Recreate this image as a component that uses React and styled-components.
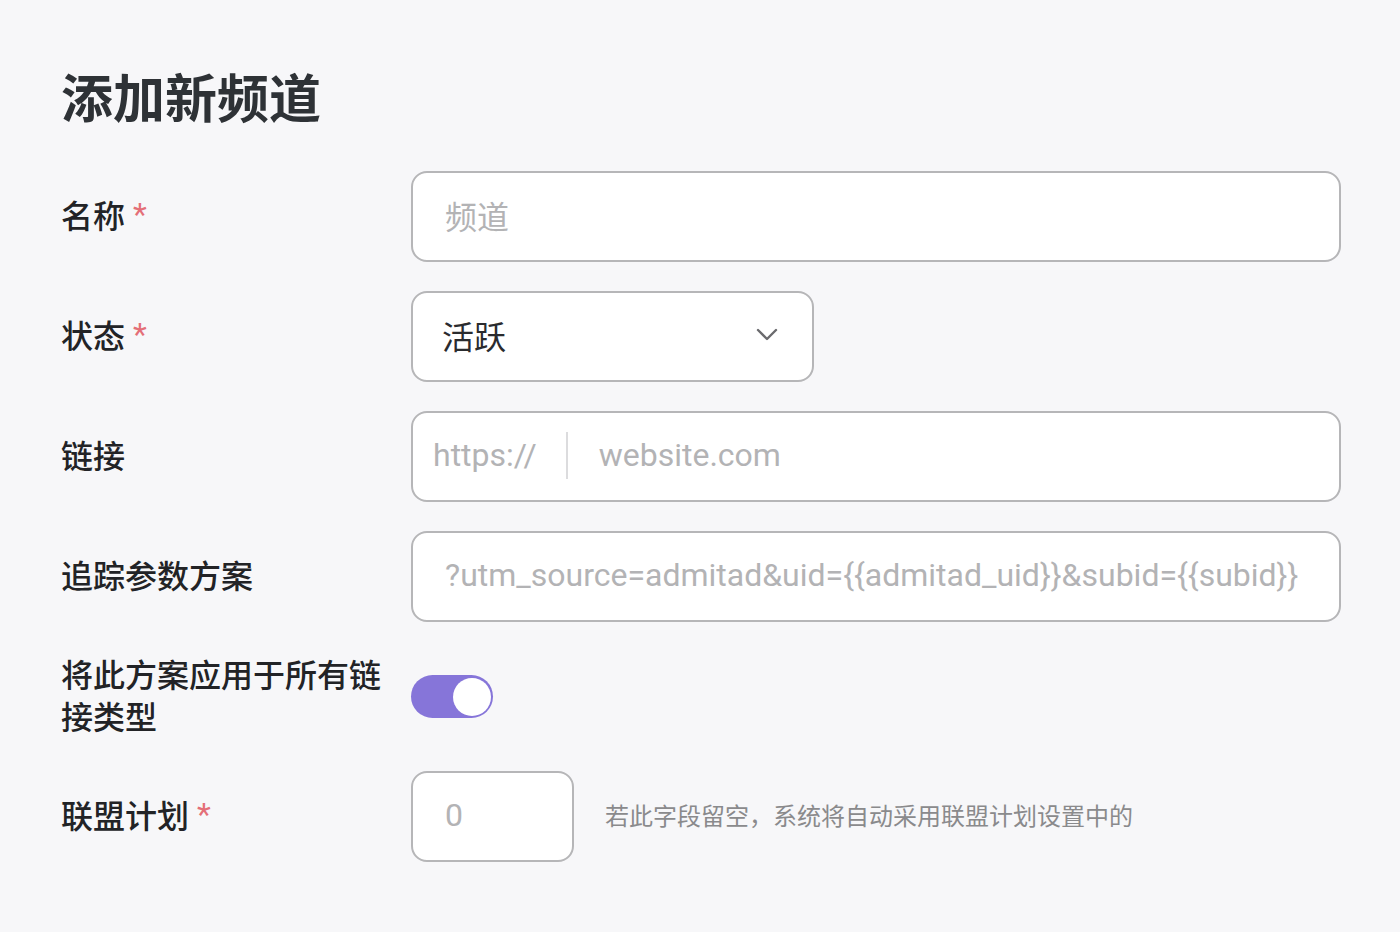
import React from "react";
import styled, { createGlobalStyle } from "styled-components";

const Global = createGlobalStyle`
  html, body { margin: 0; padding: 0; background: #f7f7f9; }
  body { font-family: Roboto, "Noto Sans CJK SC", sans-serif; }
  * { box-sizing: border-box; }
`;

const Page = styled.div`
  padding: 65px 59px 60px 61px;
  min-height: 932px;
  background: #f7f7f9;
`;

const Title = styled.h1`
  margin: 0 0 44px 0;
  font-family: "Noto Sans CJK SC", sans-serif;
  font-size: 52px;
  line-height: 62px;
  font-weight: 700;
  color: #2e3236;
`;

const Form = styled.div`
  display: grid;
  grid-template-columns: 330px 1fr;
  column-gap: 20px;
  row-gap: 29px;
`;

const Label = styled.div`
  display: flex;
  align-items: center;
  min-height: 91px;
  padding-bottom: 5px;
  font-family: "Noto Sans CJK SC", sans-serif;
  font-size: 32px;
  font-weight: 500;
  line-height: 42px;
  color: #222326;
`;

const Star = styled.span`
  color: #e46f78;
  margin-left: 8px;
  font-family: Roboto, sans-serif;
  font-weight: 400;
`;

const Field = styled.div`
  display: flex;
  align-items: center;
  gap: 31px;
  min-height: 91px;
`;

const Box = styled.div`
  display: flex;
  align-items: center;
  height: 91px;
  width: ${(p) => p.$w || "100%"};
  background: #ffffff;
  border: 2px solid #b6b6b8;
  border-radius: 16px;
  padding: 0 ${(p) => p.$pr || "32px"} 3px ${(p) => p.$pl || "32px"};
  font-family: Roboto, "Noto Sans CJK SC", sans-serif;
  font-size: 32px;
  color: ${(p) => (p.$value ? "#2a2b2e" : "#b3b3b5")};
  white-space: nowrap;
  overflow: hidden;
`;

const Grow = styled.span`
  flex: 1;
`;

const Prefix = styled.span`
  padding-right: 29px;
  border-right: 2px solid #dcdcde;
  line-height: 47px;
  color: #b3b3b5;
`;

const Host = styled.span`
  padding-left: 31px;
  color: #b3b3b5;
`;

const Toggle = styled.div`
  width: 82px;
  height: 43px;
  border-radius: 22px;
  background: #8675d9;
  display: flex;
  align-items: center;
  justify-content: ${(p) => (p.$on ? "flex-end" : "flex-start")};
  padding: 0 2px;
`;

const Knob = styled.div`
  width: 38px;
  height: 38px;
  border-radius: 50%;
  background: #ffffff;
`;

const Hint = styled.span`
  font-family: "Noto Sans CJK SC", sans-serif;
  font-size: 24px;
  color: #8a8a8c;
  padding-bottom: 4px;
`;

const Chevron = () => (
  <svg width="22" height="14" viewBox="0 0 22 14" fill="none">
    <path d="M2 2 L11 11 L20 2" stroke="#6b6b6e" strokeWidth="2.4" strokeLinecap="round" strokeLinejoin="round" />
  </svg>
);

export default function App() {
  return (
    <>
      <Global />
      <Page>
        <Title>添加新频道</Title>
        <Form>
          <Label>名称<Star>*</Star></Label>
          <Field>
            <Box>频道</Box>
          </Field>

          <Label>状态<Star>*</Star></Label>
          <Field>
            <Box $w="403px" $value $pl="29px" $pr="34px">
              <Grow>活跃</Grow>
              <Chevron />
            </Box>
          </Field>

          <Label>链接</Label>
          <Field>
            <Box $pl="20px">
              <Prefix>https://</Prefix>
              <Host>website.com</Host>
            </Box>
          </Field>

          <Label>追踪参数方案</Label>
          <Field>
            <Box>{"?utm_source=admitad&uid={{admitad_uid}}&subid={{subid}}"}</Box>
          </Field>

          <Label>将此方案应用于所有链接类型</Label>
          <Field>
            <Toggle $on>
              <Knob />
            </Toggle>
          </Field>

          <Label>联盟计划<Star>*</Star></Label>
          <Field>
            <Box $w="163px">0</Box>
            <Hint>若此字段留空，系统将自动采用联盟计划设置中的</Hint>
          </Field>
        </Form>
      </Page>
    </>
  );
}
